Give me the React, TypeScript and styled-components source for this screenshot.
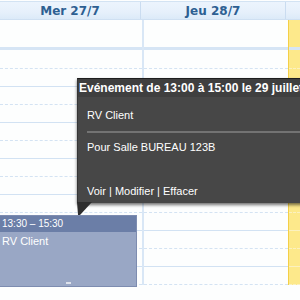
import React from 'react';
import styled, { createGlobalStyle } from 'styled-components';

const Global = createGlobalStyle`
  html, body { margin: 0; padding: 0; overflow: hidden; background: #fdfefe; }
  body { font-family: "Liberation Sans", Arial, sans-serif; }
  * { box-sizing: border-box; }
`;

const Page = styled.div`
  position: relative;
  width: 300px;
  height: 300px;
  overflow: hidden;
  background: #fdfefe;
  padding-top: 1px;
`;

const HeaderRow = styled.div`
  display: grid;
  grid-template-columns: 141px 145px 1fr;
  height: 19px;
  border-top: 1px solid #d3e3f3;
  border-bottom: 1px solid #cfe0f2;
  background: linear-gradient(#ecf4fd, #e6f0fb 60%, #dceaf8);
`;

const HeaderCell = styled.div<{ $last?: boolean }>`
  display: flex;
  align-items: center;
  justify-content: center;
  border-right: ${(p) => (p.$last ? 'none' : '1px solid #cadcf0')};
  font-family: "DejaVu Sans", Verdana, sans-serif;
  font-weight: bold;
  font-size: 12px;
  color: #2d5f92;
  padding-top: 1px;
`;

const Body = styled.div`
  display: grid;
  grid-template-columns: 144px 144px 1fr;
`;

const Column = styled.div<{ $today?: boolean; $divider?: boolean }>`
  position: relative;
  display: flex;
  flex-direction: column;
  background: ${(p) => (p.$today ? '#fde98b' : '#fdfefe')};
  border-right: ${(p) => (p.$divider ? '2px solid #d9e7f6' : 'none')};
  border-left: ${(p) => (p.$today ? '1px solid #f4cf47' : 'none')};
`;

const AllDay = styled.div`
  height: 30px;
  border-bottom: 3px solid #d6e5f5;
  margin-bottom: 1px;
`;

const Slot = styled.div<{ $dotted?: boolean; $today?: boolean }>`
  height: 18px;
  flex: none;
  border-bottom: 1px ${(p) => (p.$dotted ? 'dashed' : 'solid')}
    ${(p) => (p.$today ? '#fbf1c0' : p.$dotted ? '#d4e3f3' : '#d2e2f3')};
`;

const Event = styled.div`
  position: absolute;
  left: 0;
  width: 137px;
  display: flex;
  flex-direction: column;
  background: #99a7c5;
  border: 1px solid #7d8cb0;
  border-left: none;
  color: #fff;
`;

const EventHead = styled.div`
  height: 16px;
  background: #6b7ea7;
  font-size: 10px;
  line-height: 16px;
  padding-left: 2px;
`;

const EventTitle = styled.div`
  font-size: 11px;
  padding: 3px 0 0 2px;
  flex: 1;
`;

const Handle = styled.div`
  align-self: center;
  width: 5px;
  height: 2px;
  background: #dde2ec;
  margin: 0 0 2px 0;
`;

const Tooltip = styled.div`
  position: absolute;
  left: 77px;
  top: 78px;
  width: 260px;
  background: #474747;
  border-top: 1px solid #1e1e1e;
  border-left: 1px solid #353535;
  box-shadow: 0 2px 3px rgba(0, 0, 0, 0.55);
  color: #fff;
`;

const TipTitle = styled.div`
  height: 18px;
  line-height: 18px;
  font-weight: bold;
  font-size: 12px;
  padding-left: 1px;
  white-space: nowrap;
  background: #3f3f3f;
`;

const TipSection = styled.div<{ $rule?: boolean }>`
  margin-left: 9px;
  font-size: 11px;
  line-height: 13px;
  white-space: nowrap;
  border-bottom: ${(p) => (p.$rule ? '2px solid #737373' : 'none')};
`;

const Arrow = styled.svg`
  position: absolute;
  left: 77px;
  top: 202px;
`;

const slots = Array.from({ length: 13 }, (_, i) => i);

export default function App() {
  return (
    <>
      <Global />
      <Page>
        <HeaderRow>
          <HeaderCell>Mer 27/7</HeaderCell>
          <HeaderCell>Jeu 28/7</HeaderCell>
          <HeaderCell $last />
        </HeaderRow>
        <Body>
          <Column $divider>
            <AllDay />
            {slots.map((i) => (
              <Slot key={i} $dotted={i % 2 === 0} />
            ))}
            <Event style={{ top: 195, height: 72 }}>
              <EventHead>13:30 – 15:30</EventHead>
              <EventTitle>RV Client</EventTitle>
              <Handle />
            </Event>
          </Column>
          <Column>
            <AllDay />
            {slots.map((i) => (
              <Slot key={i} $dotted={i % 2 === 0} />
            ))}
          </Column>
          <Column $today>
            <AllDay />
            {slots.map((i) => (
              <Slot key={i} $today $dotted={i % 2 === 0} />
            ))}
          </Column>
        </Body>
        <Tooltip>
          <TipTitle>Evénement de 13:00 à 15:00 le 29 juillet</TipTitle>
          <TipSection $rule style={{ padding: '12px 0 9px' }}>RV Client</TipSection>
          <TipSection style={{ padding: '8px 0 0' }}>Pour Salle BUREAU 123B</TipSection>
          <TipSection style={{ padding: '31px 0 5px' }}>Voir | Modifier | Effacer</TipSection>
        </Tooltip>
        <Arrow width="16" height="14" viewBox="0 0 16 14">
          <polygon points="0,0 15,0 3,13 1,13" fill="#2e2e2e" />
        </Arrow>
      </Page>
    </>
  );
}
